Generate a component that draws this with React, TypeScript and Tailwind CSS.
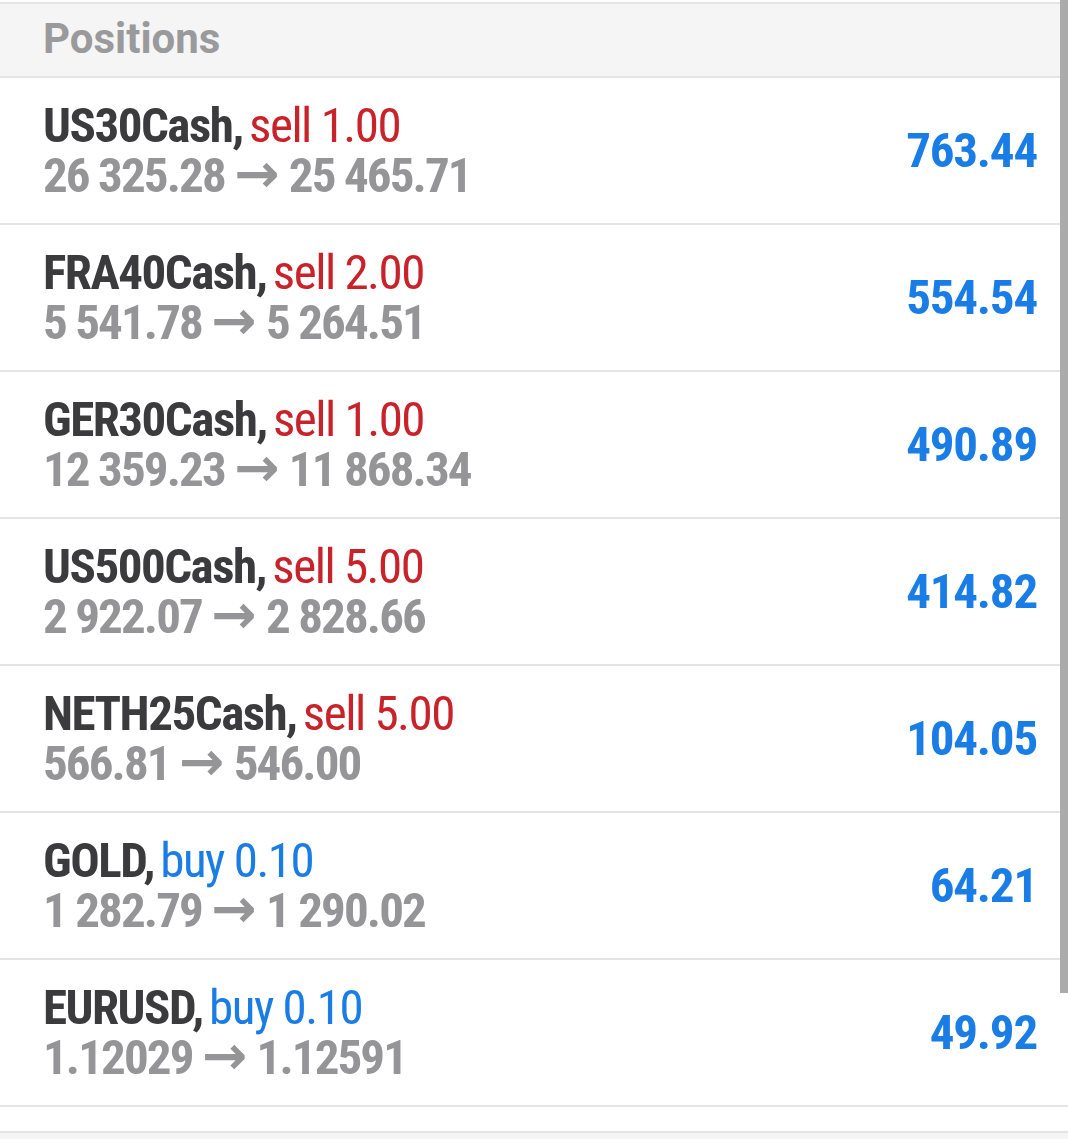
import React from "react";

type Pos = { sym: string; side: "sell" | "buy"; vol: string; from: string; to: string; profit: string };

const rows: Pos[] = [
  { sym: "US30Cash", side: "sell", vol: "1.00", from: "26 325.28", to: "25 465.71", profit: "763.44" },
  { sym: "FRA40Cash", side: "sell", vol: "2.00", from: "5 541.78", to: "5 264.51", profit: "554.54" },
  { sym: "GER30Cash", side: "sell", vol: "1.00", from: "12 359.23", to: "11 868.34", profit: "490.89" },
  { sym: "US500Cash", side: "sell", vol: "5.00", from: "2 922.07", to: "2 828.66", profit: "414.82" },
  { sym: "NETH25Cash", side: "sell", vol: "5.00", from: "566.81", to: "546.00", profit: "104.05" },
  { sym: "GOLD", side: "buy", vol: "0.10", from: "1 282.79", to: "1 290.02", profit: "64.21" },
  { sym: "EURUSD", side: "buy", vol: "0.10", from: "1.12029", to: "1.12591", profit: "49.92" },
];

export default function App() {
  return (
    <div className="relative w-[1068px] h-[1139px] overflow-hidden bg-white font-['Roboto',_'Liberation_Sans',_sans-serif]">
      <div className="h-[2px]" />
      <div className="h-[76px] bg-[#f5f5f5] border-t-2 border-b-2 border-[#e4e4e4] flex items-center pl-[43px]">
        <span className="text-[42px] leading-none font-bold text-[#9a9a9c] mt-[-2px]">Positions</span>
      </div>
      {rows.map((r) => (
        <div
          key={r.sym}
          className="h-[147px] border-b-2 border-[#e4e4e4] flex items-center justify-between pl-[43px] pr-[31px] font-['Roboto_Condensed',_Roboto,_sans-serif] font-stretch-condensed"
        >
          <div className="flex flex-col">
            <div className="text-[49px] leading-[50px] h-[50px] whitespace-nowrap tracking-[-1.5px]">
              <span className="font-bold text-[#3b3b3d]">{r.sym},</span>
              <span className="tracking-[-5px]"> </span>
              <span className={r.side === "sell" ? "text-[#c8232a]" : "text-[#1a7de6]"}>
                {r.side} {r.vol}
              </span>
            </div>
            <div className="text-[49px] leading-[50px] h-[50px] font-bold text-[#959597] whitespace-nowrap tracking-[-1.9px]">
              {r.from}{" "}
              <span className="font-['DejaVu_Sans',_sans-serif] font-stretch-normal text-[54px] leading-[0] tracking-normal">→</span>{" "}
              {r.to}
            </div>
          </div>
          <div className="text-[49px] leading-none font-bold tracking-[-1.2px] text-[#1a7de6]">{r.profit}</div>
        </div>
      ))}
      <div className="h-[24px]" />
      <div className="h-[2px] bg-[#e4e4e4]" />
      <div className="h-[20px] bg-[#f5f5f5]" />
      <div className="absolute right-0 top-0 w-[8px] h-[993px] bg-[#ababab]" />
    </div>
  );
}
